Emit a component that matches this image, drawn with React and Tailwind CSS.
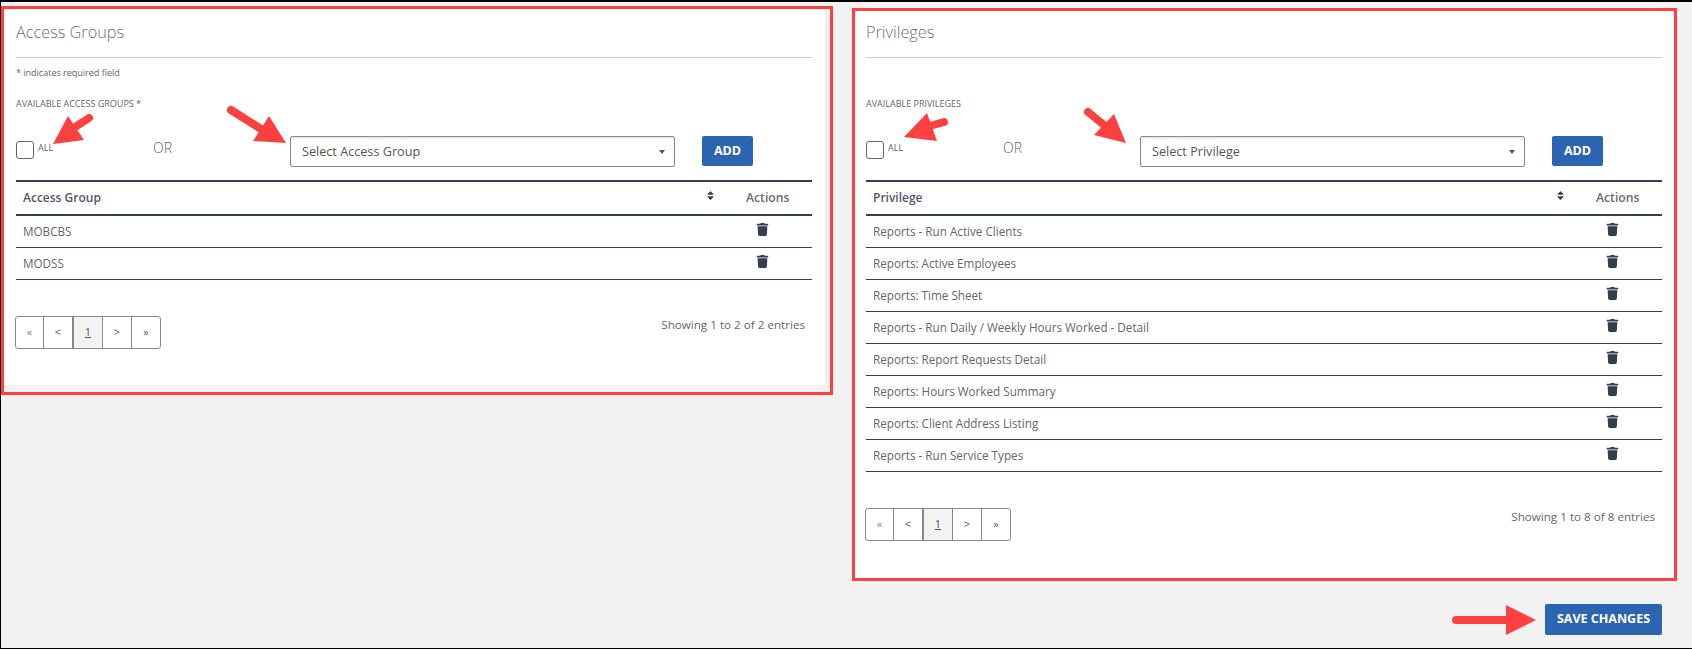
import { FaTrash, FaSort } from "react-icons/fa";

const privileges = [
  "Reports - Run Active Clients",
  "Reports: Active Employees",
  "Reports: Time Sheet",
  "Reports - Run Daily / Weekly Hours Worked - Detail",
  "Reports: Report Requests Detail",
  "Reports: Hours Worked Summary",
  "Reports: Client Address Listing",
  "Reports - Run Service Types",
];

function Panel({ title, note, label, placeholder, column, rows, total, className, innerClass, headClass }) {
  return (
    <div className={`border-[3px] border-[#ff4040] bg-[#f2f2f2] ${className}`}>
      <div className={`flex h-full flex-col bg-white ${innerClass}`}>
        <div className={`flex items-end border-b border-[#cfcfcf] pb-[14px] text-[16.3px] leading-[22px] font-light text-[#6a7078] ${headClass}`}>
          {title}
        </div>
        <div className="mt-[9px] h-[12px] text-[9px] leading-[12px] text-[#5c6670]">{note}</div>
        <div className="mt-[18px] h-[14px] text-[9px] leading-[14px] text-[#5c6670]">{label}</div>
        <div className="mt-[25px] flex h-[31px] items-start">
          <div className="mt-[5px] h-[18px] w-[18px] rounded-[3px] border border-[#666] bg-white" />
          <div className="mt-[6px] ml-[4px] w-[115px] text-[9px] leading-[12px] text-[#5c6670]">ALL</div>
          <div className="mt-[2px] w-[137px] text-[14px] leading-[20px] font-light text-[#5c6670]">OR</div>
          <div className="flex h-[31px] w-[385px] items-center justify-between rounded-[2px] border border-[#888] bg-white pr-[9px] pl-[11px] text-[12.65px] text-[#555] shadow-[inset_0_2px_2px_rgba(0,0,0,0.08)]">
            <span>{placeholder}</span>
            <span className="h-0 w-0 border-x-[3px] border-t-[4px] border-x-transparent border-t-[#555]" />
          </div>
          <button className="ml-[27px] h-[30px] w-[51px] rounded-[2px] bg-[#2b64b0] text-[12.5px] font-bold text-white">
            ADD
          </button>
        </div>
        <div className="mt-[13px] border-t-2 border-[#333f50]">
          <div className="flex h-[34px] items-center border-b-2 border-[#333f50] text-[12px] font-semibold text-[#505866]">
            <div className="flex-1 pl-[7px]">{column}</div>
            <FaSort className="mb-[5px] text-[11px] text-[#333f50]" />
            <div className="w-[96px] pl-[30px] text-[12.2px] text-[#6b6b6b]">Actions</div>
          </div>
          {rows.map((row) => (
            <div key={row} className="flex h-[32px] items-center border-b border-[#333f50] text-[11.7px] text-[#666]">
              <div className="flex-1 pl-[7px]">{row}</div>
              <div className="flex w-[56px] justify-start">
                <FaTrash className="mb-[5px] text-[13px] text-[#333f50]" />
              </div>
            </div>
          ))}
        </div>
        <div className="mt-[36px] flex items-start justify-between">
          <div className="-ml-[1px] flex h-[33px] rounded-[3px] border border-[#888] text-[11px] text-[#555]">
            <div className="flex w-[28px] items-center justify-center border-r border-[#888] text-[#888]">«</div>
            <div className="flex w-[30px] items-center justify-center border-r-2 border-[#888]">&lt;</div>
            <div className="flex w-[29px] items-center justify-center border-r border-[#888] bg-[#f3f3f3] underline">1</div>
            <div className="flex w-[29px] items-center justify-center border-r border-[#888]">&gt;</div>
            <div className="flex w-[28px] items-center justify-center">»</div>
          </div>
          <div className="mt-[1px] mr-[7px] text-[11.65px] leading-[16px] text-[#666]">
            Showing 1 to {total} of {total} entries
          </div>
        </div>
      </div>
    </div>
  );
}

function Arrows() {
  const red = "#ff4040";
  const arrows = [
    { tail: "M88 118L68 131", head: "52,144 67,116 83,140" },
    { tail: "M230 110L260 129", head: "285,143 268,116 252,141" },
    { tail: "M943 122L925 127", head: "903,137 926,113 936,141" },
    { tail: "M1087 112L1103 125", head: "1125,143 1113,114 1093,135" },
    { tail: "M1455 620L1510 620", head: "1535,620 1505,605 1505,635" },
  ];
  return (
    <svg className="absolute top-0 left-0 h-[649px] w-[1692px]" viewBox="0 0 1692 649">
      {arrows.map((a) => (
        <g key={a.head}>
          <path d={a.tail} stroke={red} strokeWidth="8" strokeLinecap="round" fill="none" />
          <polygon points={a.head} fill={red} />
        </g>
      ))}
    </svg>
  );
}

export default function App() {
  return (
    <div className="relative flex h-[649px] w-[1692px] items-start overflow-hidden border-b border-l border-black bg-[#f2f2f2] font-['Open_Sans',sans-serif] before:absolute before:top-0 before:left-0 before:h-[2px] before:w-full before:bg-black">
      <Panel
        className="mt-[6px] h-[389px] w-[832px] pr-[5px] pb-[7px]"
        innerClass="pr-[13px] pl-[12px]"
        headClass="h-[49px]"
        title="Access Groups"
        note="* indicates required field"
        label="AVAILABLE ACCESS GROUPS *"
        placeholder="Select Access Group"
        column="Access Group"
        rows={["MOBCBS", "MODSS"]}
        total={2}
      />
      <div className="ml-[19px] flex w-[825px] flex-col">
        <Panel
          className="mt-[8px] h-[573px] w-[825px]"
          innerClass="pr-[12px] pl-[11px]"
          headClass="h-[47px]"
          title="Privileges"
          note=""
          label="AVAILABLE PRIVILEGES"
          placeholder="Select Privilege"
          column="Privilege"
          rows={privileges}
          total={8}
        />
        <button className="mt-[23px] mr-[15px] h-[31px] w-[117px] self-end rounded-[2px] bg-[#2b64b0] text-[12.5px] font-bold text-white">
          SAVE CHANGES
        </button>
      </div>
      <Arrows />
    </div>
  );
}
